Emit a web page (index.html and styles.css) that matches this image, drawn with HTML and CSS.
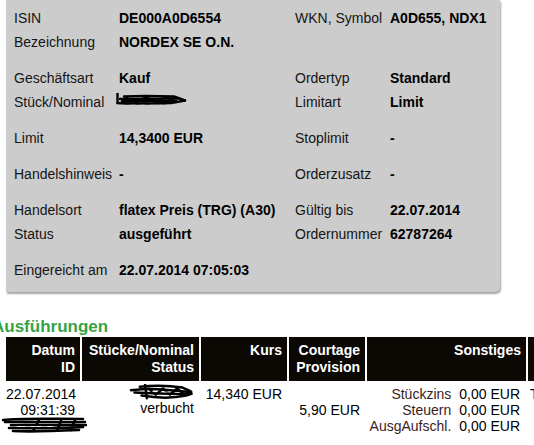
FILE: index.html
```html
<!DOCTYPE html>
<html lang="de">
<head>
<meta charset="utf-8">
<title>Orderdetails</title>
<link rel="stylesheet" href="styles.css">
</head>
<body>
<div class="page">
  <div class="panel">
    <div class="group">
      <span class="lbl">ISIN</span><span class="val">DE000A0D6554</span><span class="lbl">WKN, Symbol</span><span class="val">A0D655, NDX1</span>
      <span class="lbl">Bezeichnung</span><span class="val">NORDEX SE O.N.</span><span></span><span></span>
    </div>
    <div class="group">
      <span class="lbl">Geschäftsart</span><span class="val">Kauf</span><span class="lbl">Ordertyp</span><span class="val">Standard</span>
      <span class="lbl">Stück/Nominal</span><span class="val"><svg class="scr-panel" viewBox="0 0 72 14" width="72" height="14"><g fill="none" stroke="#000" stroke-width="2.4" stroke-linecap="round" stroke-linejoin="round"><path d="M1.5 0.5V10"/><path d="M1.5 10C15 11 35 10.5 55 10L69 7.5"/><path d="M8 3.5C25 2.5 45 3 58 3.5L69 7.5"/><path d="M4 6L62 5.5M6 8.5L60 8"/><path d="M10 4.5L20 9L30 4L40 9L50 4L60 9"/></g><g fill="none" stroke="#555" stroke-width="1"><path d="M14 11.5h6M24 11.5h5M34 11.5h8M46 11.5h4"/></g></svg></span><span class="lbl">Limitart</span><span class="val">Limit</span>
    </div>
    <div class="group">
      <span class="lbl">Limit</span><span class="val">14,3400 EUR</span><span class="lbl">Stoplimit</span><span class="val">-</span>
    </div>
    <div class="group">
      <span class="lbl">Handelshinweis</span><span class="val">-</span><span class="lbl">Orderzusatz</span><span class="val">-</span>
    </div>
    <div class="group">
      <span class="lbl">Handelsort</span><span class="val">flatex Preis (TRG) (A30)</span><span class="lbl">Gültig bis</span><span class="val">22.07.2014</span>
      <span class="lbl">Status</span><span class="val">ausgeführt</span><span class="lbl">Ordernummer</span><span class="val">62787264</span>
    </div>
    <div class="group last">
      <span class="lbl">Eingereicht am</span><span class="val">22.07.2014 07:05:03</span><span></span><span></span>
    </div>
  </div>

  <h2 class="section">Ausführungen</h2>

  <div class="exec">
    <div class="th">Datum<br>ID</div>
    <div class="th">Stücke/Nominal<br>Status</div>
    <div class="th">Kurs</div>
    <div class="th">Courtage<br>Provision</div>
    <div class="th">Sonstiges</div>
    <div class="th"></div>

    <div class="td">22.07.2014<br>09:31:39<svg class="scr-id" viewBox="0 0 86 18" width="86" height="18"><g fill="none" stroke="#000" stroke-width="2.6" stroke-linecap="round"><path d="M2 4C20 2 50 3 82 3"/><path d="M4 6C30 5 60 7 84 6"/><path d="M10 9C30 8 60 10 85 9"/><path d="M8 12C30 12 60 13 82 11"/><path d="M12 15C30 16 55 15 78 14"/><path d="M38 4L32 15M60 5L56 14M74 4L70 14"/></g><g fill="none" stroke="#fff" stroke-width="0.8"><path d="M16 10.5h8M30 10.5h10M46 10.5h6"/></g></svg></div>
    <div class="td"><svg class="scr-qty" viewBox="0 0 70 18" width="72" height="18"><g fill="none" stroke="#000" stroke-width="2.8" stroke-linecap="round" stroke-linejoin="round"><path d="M0 7C10 6 20 5 30 6C40 7 55 8 68 9"/><path d="M10 3C25 1.5 45 2 58 4L67 8"/><path d="M4 9.5C20 10.5 40 11 68 11"/><path d="M12 13C30 16 48 16 62 13L68 11"/><path d="M16 1L18 16"/><path d="M20 5L28 12L36 5L44 12L52 5L60 12"/></g><g fill="none" stroke="#fff" stroke-width="0.8"><path d="M24 8.5h6M36 9h8M50 9.5h5"/></g></svg>verbucht</div>
    <div class="td">14,340 EUR</div>
    <div class="td"><br>5,90 EUR</div>
    <div class="td">
      <div class="misc">
        <span class="mlbl">Stückzins</span><span>0,00 EUR</span>
        <span class="mlbl">Steuern</span><span>0,00 EUR</span>
        <span class="mlbl">AusgAufschl.</span><span>0,00 EUR</span>
      </div>
    </div>
    <div class="td left">T</div>
  </div>
</div>
</body>
</html>
```

FILE: styles.css
```css
html, body {
  margin: 0;
  padding: 0;
  background: #fff;
}

body {
  font-family: "Liberation Sans", Arial, sans-serif;
  font-size: 14px;
  color: #111;
  width: 534px;
  height: 445px;
  overflow: hidden;
}

.page {
  width: 534px;
  overflow: hidden;
}

.panel {
  margin-left: 6px;
  width: 494px;
  background: #cccccc;
  padding: 6px 0 10px 8px;
  box-sizing: border-box;
  border-bottom-right-radius: 5px;
  box-shadow: 1px 2px 2px rgba(0, 0, 0, 0.35);
}

.group {
  display: grid;
  grid-template-columns: 105px 176px 95px 1fr;
  grid-auto-rows: 24px;
  line-height: 24px;
  margin-bottom: 12px;
}

.group.last {
  margin-bottom: 0;
}

.lbl {
  white-space: nowrap;
  color: #151515;
}

.val {
  font-weight: bold;
  color: #000;
  white-space: nowrap;
}

.scr-panel {
  display: block;
  margin: 3px 0 0 -3px;
}

.section {
  margin: 25px 0 0 -8px;
  font-size: 17px;
  line-height: 20px;
  font-weight: bold;
  color: #36a346;
}

.exec {
  display: grid;
  grid-template-columns: 74px 117px 86px 76px 159px 100px;
  column-gap: 2px;
  margin-left: 6px;
  width: 630px;
}

.th {
  background: #0c0905;
  color: #fff;
  font-weight: bold;
  text-align: right;
  line-height: 17px;
  padding: 5px 5px 5px 0;
  height: 34px;
  white-space: nowrap;
}

.td {
  text-align: right;
  line-height: 16px;
  padding: 5px 5px 0 0;
  color: #000;
  white-space: nowrap;
}

.td.left {
  text-align: left;
  padding-left: 2px;
}

.scr-id {
  display: block;
  margin: -2px 0 0 -5px;
}

.scr-qty {
  display: block;
  margin: -2px -4px 0 auto;
  height: 16px;
}

.misc {
  display: grid;
  grid-template-columns: 1fr auto;
  column-gap: 8px;
  padding-right: 1px;
}

.mlbl {
  color: #3a1c1c;
}
```
